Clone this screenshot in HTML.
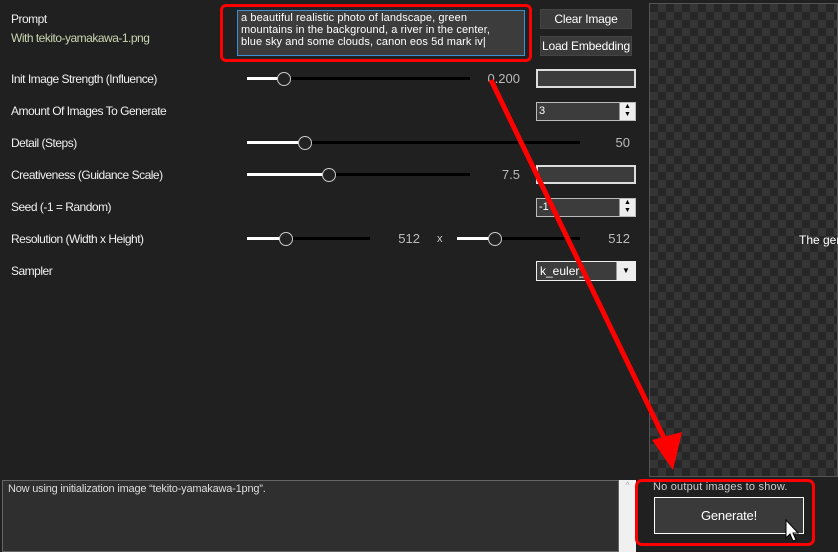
<!DOCTYPE html>
<html><head><meta charset="utf-8"><style>
body{margin:0;width:838px;height:552px;background:#202020;position:relative;overflow:hidden;font-family:"Liberation Sans","Noto Sans CJK JP",sans-serif;color:#fff;font-size:12px}
.a{position:absolute;white-space:nowrap}
.lbl{position:absolute;left:11px;font-size:12px;color:#f0f0f0;letter-spacing:-0.5px;white-space:nowrap}
.trk{position:absolute;height:3px;background:#000}
.fill{position:absolute;height:3px;background:#fff}
.knob{position:absolute;width:12px;height:12px;border-radius:50%;border:1px solid #ccc;background:#222;margin-top:-6px}
.val{position:absolute;color:#bbb;font-size:13px;text-align:right}
.box{position:absolute;background:#3c3c3c;border:1px solid #bbb;box-sizing:border-box}
.spin{position:absolute;right:0;top:0;width:15px;height:100%;background:#eee;border-left:1px solid #999;color:#000;font-size:7px;line-height:8px;text-align:center}
.btn{position:absolute;background:#3a3a3a;color:#fff;font-size:12px;text-align:center;border:1px solid #444;box-sizing:border-box;white-space:nowrap;letter-spacing:-0.2px}
</style></head><body>
<div class="lbl" style="top:12px">Prompt</div>
<div class="lbl" style="top:31px;color:#c8d6b0">With tekito-yamakawa-1.png</div>
<div class="lbl" style="top:72px">Init Image Strength (Influence)</div>
<div class="lbl" style="top:104px">Amount Of Images To Generate</div>
<div class="lbl" style="top:136px">Detail (Steps)</div>
<div class="lbl" style="top:168px">Creativeness (Guidance Scale)</div>
<div class="lbl" style="top:200px">Seed (-1 = Random)</div>
<div class="lbl" style="top:232px">Resolution (Width x Height)</div>
<div class="lbl" style="top:264px">Sampler</div>

<div class="a" style="left:237px;top:10px;width:288px;height:46px;background:#3c3c3c;border:1px solid #3d8fd6;box-sizing:border-box;font-size:11px;line-height:12px;padding:1px 3px;color:#fff;letter-spacing:0.1px;overflow:hidden">a beautiful realistic photo of landscape, green<br>mountains in the background, a river in the center,<br>blue sky and some clouds, canon eos 5d mark iv|</div>
<div class="a" style="left:220px;top:4px;width:312px;height:58px;border:3px solid #f00;border-radius:6px;box-sizing:border-box"></div>

<div class="btn" style="left:540px;top:9px;width:92px;height:20px;line-height:18px">Clear Image</div>
<div class="btn" style="left:540px;top:36px;width:92px;height:20px;line-height:18px">Load Embedding</div>

<div class="trk" style="left:247px;top:77px;width:223px"></div><div class="fill" style="left:247px;top:77px;width:36px"></div><div class="knob" style="left:277px;top:78px"></div>
<div class="val" style="left:470px;top:71px;width:50px">0.200</div>
<div class="box" style="left:536px;top:69px;width:100px;height:19px;border:2px solid #ddd"></div>

<div class="box" style="left:536px;top:102px;width:100px;height:19px"><span style="font-size:11px;padding-left:2px">3</span><div class="spin">▲<br>▼</div></div>

<div class="trk" style="left:247px;top:141px;width:333px"></div><div class="fill" style="left:247px;top:141px;width:57px"></div><div class="knob" style="left:298px;top:142px"></div>
<div class="val" style="left:580px;top:135px;width:50px">50</div>

<div class="trk" style="left:247px;top:173px;width:223px"></div><div class="fill" style="left:247px;top:173px;width:81px"></div><div class="knob" style="left:322px;top:174px"></div>
<div class="val" style="left:470px;top:167px;width:50px">7.5</div>
<div class="box" style="left:536px;top:165px;width:100px;height:19px;border:2px solid #ddd"></div>

<div class="box" style="left:536px;top:198px;width:100px;height:19px"><span style="font-size:11px;padding-left:2px">-1</span><div class="spin">▲<br>▼</div></div>

<div class="trk" style="left:247px;top:237px;width:123px"></div><div class="fill" style="left:247px;top:237px;width:38px"></div><div class="knob" style="left:279px;top:238px"></div>
<div class="val" style="left:370px;top:231px;width:50px">512</div>
<div class="a" style="left:437px;top:233px;font-size:11px;color:#ccc">x</div>
<div class="trk" style="left:457px;top:237px;width:123px"></div><div class="fill" style="left:457px;top:237px;width:37px"></div><div class="knob" style="left:488px;top:238px"></div>
<div class="val" style="left:580px;top:231px;width:50px">512</div>

<div class="box" style="left:536px;top:261px;width:100px;height:20px;border-color:#eee"><span style="font-size:12px;padding-left:3px;line-height:18px">k_euler_</span><div class="spin" style="width:18px;font-size:8px;line-height:18px;background:#eee">▼</div></div>

<div class="a" style="left:649px;top:3px;width:189px;height:474px;border:1px solid #555;box-sizing:border-box;background-color:#262626;background-image:linear-gradient(45deg,#353535 25%,transparent 25%,transparent 75%,#353535 75%),linear-gradient(45deg,#353535 25%,transparent 25%,transparent 75%,#353535 75%);background-size:16px 16px;background-position:0 0,8px 8px"></div>
<div class="a" style="left:799px;top:233px;font-size:12px">The gen</div>

<div class="a" style="left:2px;top:480px;width:617px;height:72px;background:#2f2f2f;border:1px solid #666;box-sizing:border-box;font-size:11px;color:#ddd;padding:2px 5px;letter-spacing:-0.2px">Now using initialization image “tekito-yamakawa-1png”.</div>
<div class="a" style="left:619px;top:480px;width:17px;height:72px;background:#f0f0f0;color:#aaa;font-size:9px;text-align:center">^</div>

<div class="a" style="left:653px;top:481px;font-size:11px;color:#ccc;letter-spacing:0.2px">No output images to show.</div>
<div class="btn" style="left:654px;top:497px;width:150px;height:37px;border:1px solid #fff;line-height:35px;font-size:13px">Generate!</div>
<div class="a" style="left:635px;top:479px;width:180px;height:67px;border:3px solid #f00;border-radius:7px;box-sizing:border-box"></div>

<svg class="a" style="left:0;top:0" width="838" height="552">
<line x1="491" y1="80" x2="665" y2="440" stroke="#f00" stroke-width="5"/>
<polygon points="652,440 682,432 673,470" fill="#f00"/>
<path d="M786,520 L786,538 L790,534 L793,541 L796,540 L793,533 L798,533 Z" fill="#fff" stroke="#000" stroke-width="1"/>
</svg>
</body></html>
